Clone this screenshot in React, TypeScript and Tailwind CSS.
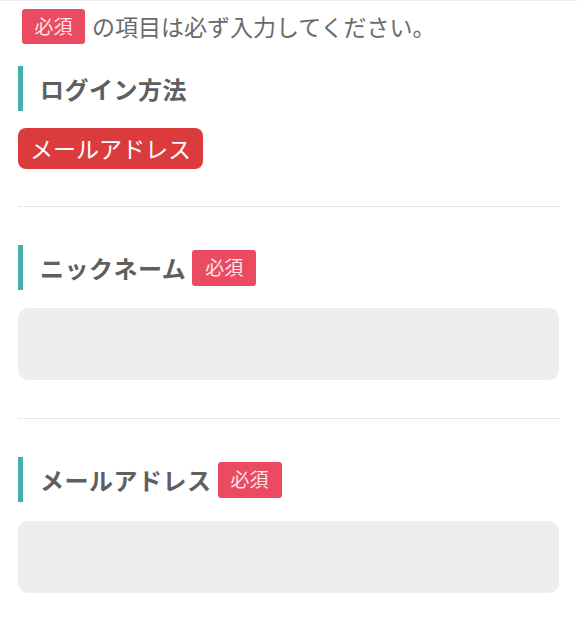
const font = { fontFamily: '"Noto Sans CJK JP", "Noto Sans", sans-serif' }

function Required() {
  return (
    <span className="inline-flex h-[36px] w-[64px] items-center justify-center rounded-[3px] bg-[#ea4b60] text-[19px] text-[#fde4e8]">
      必須
    </span>
  )
}

function Heading({ label, required }: { label: string; required?: boolean }) {
  return (
    <div className="flex h-[45px] items-center gap-[6px] border-l-[5px] border-[#45b0aa] pl-[17px]">
      <h2 className="text-[24px] font-bold leading-none tracking-[0.5px] text-[#5f5f5f]">{label}</h2>
      {required && <Required />}
    </div>
  )
}

function Divider() {
  return <div className="border-t border-dotted border-[#cfcfcf]" />
}

export default function App() {
  return (
    <div className="min-h-screen border-t border-[#ececec] bg-white px-[18px]" style={font}>
      <div className="mt-[8px] flex h-[35px] items-center gap-[7px] pl-[4px]">
        <span className="inline-flex h-[35px] w-[63px] items-center justify-center rounded-[3px] bg-[#ea4b60] text-[19px] text-[#fde4e8]">
          必須
        </span>
        <p className="text-[23px] text-[#6a6a6a]">の項目は必ず入力してください。</p>
      </div>

      <div className="mt-[22px]">
        <Heading label="ログイン方法" />
        <button className="mt-[17px] h-[41px] rounded-[8px] bg-[#dc3b3d] px-[12px] text-[23px] text-white">
          メールアドレス
        </button>
      </div>

      <div className="mt-[37px]">
        <Divider />
      </div>

      <div className="mt-[38px]">
        <Heading label="ニックネーム" required />
        <input className="mt-[18px] block h-[72px] w-full rounded-[10px] bg-[#eeeeee] outline-none" />
      </div>

      <div className="mt-[38px]">
        <Divider />
      </div>

      <div className="mt-[38px]">
        <Heading label="メールアドレス" required />
        <input className="mt-[19px] block h-[72px] w-full rounded-[10px] bg-[#eeeeee] outline-none" />
      </div>
    </div>
  )
}
